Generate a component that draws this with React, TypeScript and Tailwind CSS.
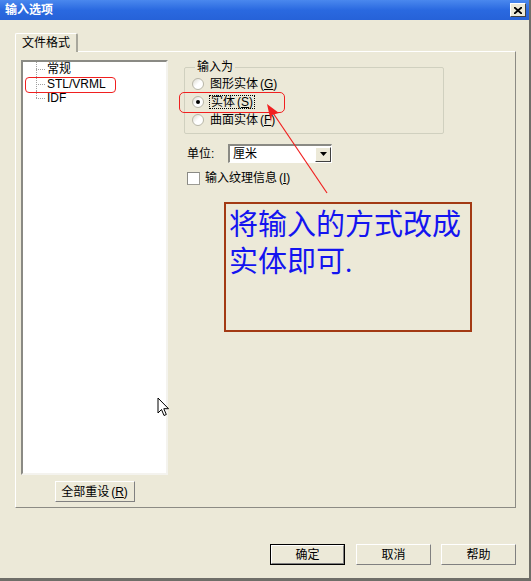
const font = { fontFamily: '"Liberation Sans", "Noto Sans CJK SC", sans-serif' };
const bigFont = { fontFamily: '"Liberation Serif", "Noto Sans CJK SC", serif' };

const Key = ({ k }: { k: string }) => (
  <span className="ml-[2px]">
    (<span className="underline">{k}</span>)
  </span>
);

const Btn = ({ children, w, def }: { children: React.ReactNode; w: string; def?: boolean }) => (
  <div
    className={`${w} h-[21px] flex items-center justify-center bg-[#ece9d8] text-[12px] text-black ${
      def ? "border border-black" : "border-t border-l border-white border-r border-b border-r-[#808080] border-b-[#808080]"
    }`}
  >
    {def ? (
      <div className="w-full h-full flex items-center justify-center border-t border-l border-white border-r border-b border-r-[#808080] border-b-[#808080]">
        {children}
      </div>
    ) : (
      children
    )}
  </div>
);

const Radio = ({ on }: { on?: boolean }) => (
  <div className="w-[12px] h-[12px] rounded-full border border-[#b8b6a8] bg-gradient-to-br from-[#dcdad0] via-white to-white flex items-center justify-center">
    {on && <div className="w-[4px] h-[4px] rounded-full bg-black" />}
  </div>
);

const TreeItem = ({ label, last }: { label: string; last?: boolean }) => (
  <div className="relative h-[14.5px] flex items-center pl-[24px]">
    <div className="absolute left-[13px] top-1/2 w-[9px] border-t border-dotted border-[#a0a0a0]" />
    <div
      className={`absolute left-[13px] border-l border-dotted border-[#a0a0a0] ${last ? "top-0 h-1/2" : "top-0 h-full"}`}
    />
    <span className="leading-[14px]">{label}</span>
  </div>
);

export default function App() {
  return (
    <div
      className="relative w-[531px] h-[581px] bg-[#ece9d8] flex flex-col overflow-hidden border-r-2 border-b-[3px] border-r-[#6f6e68] border-b-[#6f6e68] text-[12px] text-black"
      style={font}
    >
      {/* title bar */}
      <div className="h-[20px] shrink-0 flex items-center justify-between pl-[5px] pr-[3px] bg-gradient-to-b from-[#4a88ee] via-[#2a69e0] to-[#2662d8]">
        <span className="text-white font-bold text-[12px] leading-none">输入选项</span>
        <div className="w-[16px] h-[14px] bg-[#ece9d8] border-t border-l border-white border-r border-b border-r-[#404040] border-b-[#404040] flex items-center justify-center">
          <svg width="8" height="7" viewBox="0 0 8 7">
            <path d="M0 0 L8 7 M8 0 L0 7" stroke="#000" strokeWidth="1.8" />
          </svg>
        </div>
      </div>

      <div className="flex-1 flex flex-col pl-[15px] pr-[13px] pt-[13px]">
        {/* tab */}
        <div className="relative z-10 -mb-px w-[63px] h-[19px] bg-[#ece9d8] border-t border-l border-white border-r-2 border-r-[#a8a79c] rounded-tl-[2px] rounded-tr-[2px] flex items-center pl-[6px]">
          文件格式
        </div>
        {/* panel */}
        <div className="h-[457px] shrink-0 border-t border-l border-white border-r border-b border-r-[#8c8b84] border-b-[#8c8b84] flex pl-[5px] pt-[8px]">
          {/* left column */}
          <div className="w-[147px] flex flex-col items-center">
            <div className="w-[147px] h-[415px] shrink-0 bg-white border-t-2 border-l-2 border-t-[#8a8a84] border-l-[#8a8a84] border-r-2 border-b-2 border-r-[#f4f3ee] border-b-[#f4f3ee]">
              <TreeItem label="常规" />
              <TreeItem label="STL/VRML" />
              <TreeItem label="IDF" last />
            </div>
            <div className="mt-[6px]">
              <Btn w="w-[80px]">
                全部重设
                <Key k="R" />
              </Btn>
            </div>
          </div>

          {/* right column */}
          <div className="ml-[16px] flex flex-col">
            <fieldset className="mt-[1px] w-[260px] h-[73px] shrink-0 border border-[#d0d0bf] rounded-[2px] pl-[7px] pt-0">
              <legend className="ml-[3px] px-[2px] leading-[13px]">输入为</legend>
              <div className="mt-[1px] h-[18px] flex items-center gap-[6px]">
                <Radio />
                <span>
                  图形实体
                  <Key k="G" />
                </span>
              </div>
              <div className="h-[18px] flex items-center gap-[5px]">
                <Radio on />
                <span className="border border-dotted border-black px-[1px] leading-[12px]">
                  实体
                  <Key k="S" />
                </span>
              </div>
              <div className="h-[18px] flex items-center gap-[6px]">
                <Radio />
                <span>
                  曲面实体
                  <Key k="F" />
                </span>
              </div>
            </fieldset>

            <div className="mt-[10px] h-[19px] flex items-center">
              <span className="ml-[3px] w-[41px]">单位:</span>
              <div className="w-[104px] h-[19px] bg-white border-t-2 border-l-2 border-t-[#8a8a84] border-l-[#8a8a84] border-r border-b border-r-white border-b-white flex items-center justify-between">
                <span className="pl-[3px]">厘米</span>
                <div className="w-[16px] h-[15px] bg-[#ece9d8] border-t border-l border-white border-r border-b border-r-[#404040] border-b-[#404040] flex items-center justify-center">
                  <svg width="7" height="4" viewBox="0 0 7 4">
                    <path d="M0 0 H7 L3.5 4 Z" fill="#000" />
                  </svg>
                </div>
              </div>
            </div>

            <div className="mt-[9px] h-[13px] flex items-center leading-[13px]">
              <div className="ml-[3px] w-[13px] h-[13px] bg-white border border-[#9c9b94] border-t-[#8a8a84] border-l-[#8a8a84]" />
              <span className="ml-[5px]">
                输入纹理信息
                <Key k="I" />
              </span>
            </div>

            {/* annotation */}
            <div
              className="mt-[17px] ml-[40px] w-[248px] h-[130px] shrink-0 border-2 border-[#a33a14] pl-[3px] pt-[3px] text-[29px] leading-[37px] text-[#1414f0]"
              style={bigFont}
            >
              <div>将输入的方式改成</div>
              <div>实体即可.</div>
            </div>
          </div>
        </div>

        {/* bottom buttons */}
        <div className="mt-[36px] flex justify-end">
          <Btn w="w-[75px]" def>
            确定
          </Btn>
          <div className="ml-[11px]">
            <Btn w="w-[75px]">取消</Btn>
          </div>
          <div className="ml-[10px]">
            <Btn w="w-[75px]">帮助</Btn>
          </div>
        </div>
      </div>

      {/* red highlight marks */}
      <div className="absolute left-[25px] top-[77px] w-[91px] h-[16px] border border-[#f02020] rounded-[4px]" />
      <div className="absolute left-[179px] top-[92px] w-[106px] h-[21px] border border-[#f02020] rounded-[5px]" />
      <svg className="absolute left-0 top-0" width="531" height="581" viewBox="0 0 531 581">
        <line x1="327" y1="193" x2="271" y2="110" stroke="#f02020" strokeWidth="1.2" />
        <path d="M267 104 L279 113 L272 115 L271 122 Z" fill="#f02020" />
      </svg>

      {/* mouse cursor */}
      <svg className="absolute left-[157px] top-[397px]" width="13" height="20" viewBox="0 0 13 20">
        <path
          d="M1 1 L1 16 L4.5 12.5 L7 18.5 L9.3 17.5 L6.8 11.7 L11.5 11.7 Z"
          fill="#fff"
          stroke="#000"
          strokeWidth="1"
          strokeLinejoin="miter"
        />
      </svg>
    </div>
  );
}
